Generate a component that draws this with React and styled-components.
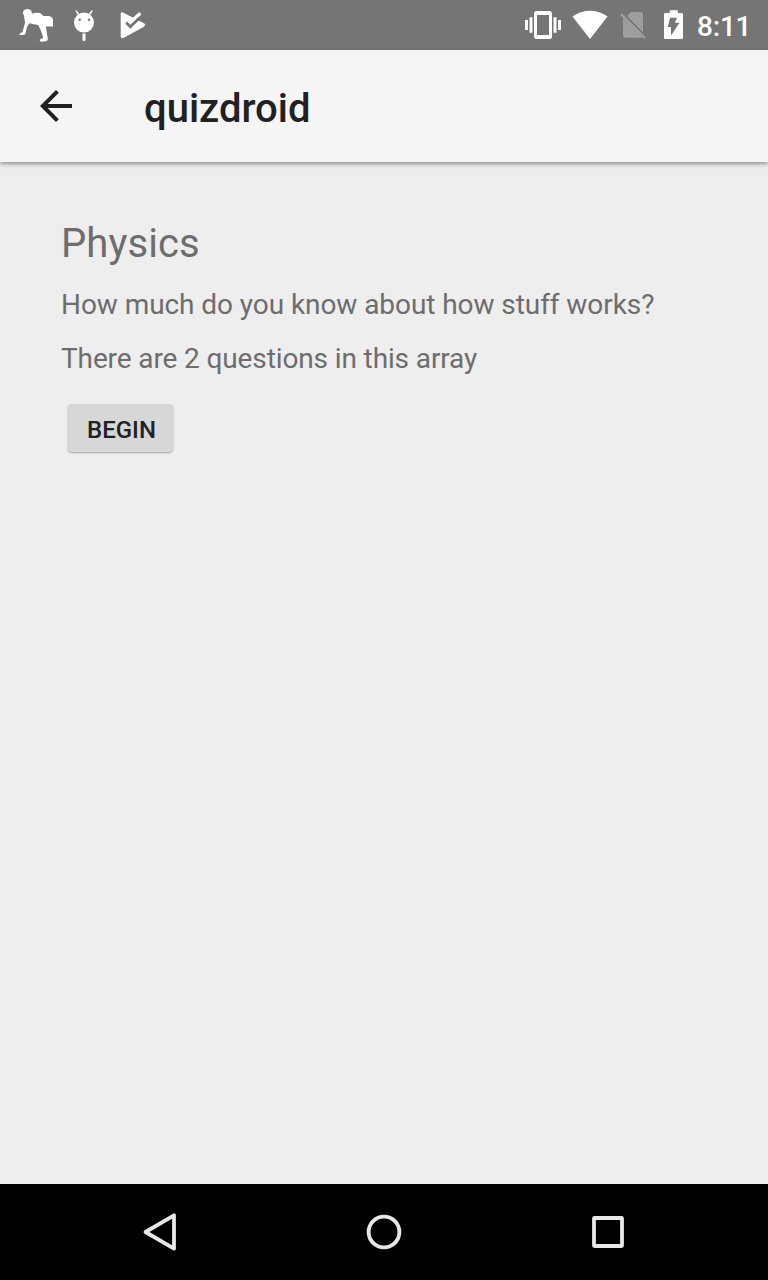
import React from "react";
import styled, { createGlobalStyle } from "styled-components";

const GlobalStyle = createGlobalStyle`
  * { box-sizing: border-box; }
  body { margin: 0; background: #eeeeee; font-family: Roboto, "Liberation Sans", sans-serif; }
`;

const Screen = styled.div`
  display: flex;
  flex-direction: column;
  width: 768px;
  height: 1280px;
  background: #eeeeee;
`;

const StatusBar = styled.header`
  display: flex;
  justify-content: space-between;
  flex: none;
  height: 50px;
  padding: 0 14px 0 16px;
  background: #757575;
  color: #ffffff;
`;

const StatusGroup = styled.div`
  display: flex;
  align-items: center;
`;

const Glyph = styled.svg`
  display: block;
  flex: none;
`;

const Clock = styled.time`
  width: 58px;
  padding: 3px 0 0 1px;
  font-size: 28px;
  font-weight: 500;
  line-height: 34px;
  letter-spacing: -0.2px;
  white-space: nowrap;
`;

const AppBar = styled.div`
  display: flex;
  align-items: center;
  flex: none;
  height: 112px;
  padding-left: 32px;
  background: #f5f5f5;
  box-shadow: 0 2px 3px rgba(0, 0, 0, 0.22), 0 2px 6px rgba(0, 0, 0, 0.2);
`;

const IconButton = styled.button`
  display: flex;
  padding: 0;
  border: 0;
  background: none;
`;

const Title = styled.h1`
  margin: 6px 0 0 64px;
  color: #212121;
  font-size: 40px;
  font-weight: 500;
  line-height: 48px;
`;

const Content = styled.main`
  display: flex;
  flex: 1;
  flex-direction: column;
  align-items: flex-start;
  padding: 58px 60px 0 61px;
  color: #6d6d6d;
`;

const Topic = styled.h2`
  margin: 0;
  font-size: 40px;
  font-weight: 400;
  line-height: 48px;
  letter-spacing: 0.1px;
`;

const Line = styled.p`
  margin: 20px 0 0;
  font-size: 28px;
  line-height: 34px;
  letter-spacing: ${(p) => p.$tracking}px;
`;

const BeginButton = styled.button`
  width: 105px;
  height: 48px;
  margin: 28px 0 0 7px;
  padding: 3px 0 0 2px;
  border: 0;
  border-radius: 4px;
  background: #d6d7d7;
  color: #212121;
  font: 500 24px/28px Roboto, "Liberation Sans", sans-serif;
  text-transform: uppercase;
  box-shadow: 0 1px 2px rgba(0, 0, 0, 0.3);
`;

const NavBar = styled.nav`
  display: flex;
  align-items: center;
  justify-content: space-between;
  flex: none;
  height: 96px;
  padding: 0 136px;
  background: #000000;
`;

const StatusIcon = ({ from, width, children }) => (
  <Glyph width={width} height="50" viewBox={`${from} 0 ${width} 50`} fill="#ffffff">
    {children}
  </Glyph>
);

const NavIcon = ({ children }) => (
  <IconButton>
    <Glyph width="48" height="48" viewBox="0 0 48 48" fill="none" stroke="#e8e8e8" strokeWidth="3.8" strokeLinejoin="round">
      {children}
    </Glyph>
  </IconButton>
);

export default function App() {
  return (
    <>
      <GlobalStyle />
      <Screen>
        <StatusBar>
          <StatusGroup>
            <StatusIcon from={16} width={48}>
              <ellipse cx="27.4" cy="13" rx="4.5" ry="4" />
              <path d="M24 15.5 L31 14 Q36 12 40 13 L43.5 16 L49 16 Q52 16.5 53 19 V26.5 H45.8 L47.8 38.5 Q48 41 45.5 41.2 L42 41.8 Q39 41.5 40 39.5 L43.3 37.8 L41 31 L38.3 25 Q34 24.5 29.5 23.3 L27 27 L25.5 33.8 Q25 35.2 19.4 35 Q19 33.5 22.4 32.3 L25 23 Z" />
            </StatusIcon>
            <StatusIcon from={64} width={48}>
              <circle cx="84" cy="22.6" r="10" />
              <path d="M76.3 11 L79 15 M92 11 L89 15" stroke="#ffffff" strokeWidth="1.5" strokeLinecap="round" />
              <path d="M82.5 33.5H85.5V40Q85.5 41 84 41Q82.5 41 82.5 40Z" />
              <circle cx="79.7" cy="19.7" r="1.2" fill="#757575" />
              <circle cx="89" cy="19.7" r="1.2" fill="#757575" />
            </StatusIcon>
            <StatusIcon from={112} width={48}>
              <path d="M120.7 14 Q120.5 11.4 123 12.5 L144 23.3 Q146 25 144 26.7 L123.3 38 Q120.7 38.8 120.7 36 Z" />
              <path d="M126.2 22.6 L130.3 26.8 L143 14.5" fill="none" stroke="#757575" strokeWidth="2.8" />
              <path d="M131 21.5 L140.3 13.3" fill="none" stroke="#ffffff" strokeWidth="3.2" />
            </StatusIcon>
          </StatusGroup>
          <StatusGroup>
            <StatusIcon from={520} width={48}>
              <path fillRule="evenodd" d="M536.5 11H549.5Q552 11 552 13.5V36.5Q552 39 549.5 39H536.5Q534 39 534 36.5V13.5Q534 11 536.5 11ZM537 15V35H549V15Z" />
              <path d="M525 20H528V30H525ZM529.5 17.3H532.5V32.7H529.5ZM553.5 17.3H556.5V32.7H553.5ZM558 20H561V30H558Z" />
            </StatusIcon>
            <StatusIcon from={568} width={48}>
              <path d="M572.5 16.5C583 8.8 597 8.8 607.5 16.5L590 39Z" />
            </StatusIcon>
            <StatusIcon from={616} width={40}>
              <g fill="#9e9e9e">
                <path d="M631 12H640.5Q643 12 643 14.5V32.2L627 16ZM623 17.5L643 37.8H625.5Q623 37.8 623 35.5Z" />
                <path d="M621.8 13.2L645.9 37.2L644.2 39L620 14.8Z" />
              </g>
            </StatusIcon>
            <StatusIcon from={656} width={40}>
              <path d="M669.7 10.2H677.8V13H682Q683 13 683 14V38Q683 39 682 39H665Q664 39 664 38V14Q664 13 665 13H669.7Z" />
              <path d="M670 17.8H677L674.7 22.8H679.5L671 35.5V27H667.8Z" fill="#757575" />
            </StatusIcon>
            <Clock>8:11</Clock>
          </StatusGroup>
        </StatusBar>
        <AppBar>
          <IconButton aria-label="Back">
            <Glyph width="48" height="48" viewBox="0 0 24 24" fill="#212121">
              <path d="M20 11H7.83l5.59-5.59L12 4l-8 8 8 8 1.41-1.41L7.83 13H20v-2z" />
            </Glyph>
          </IconButton>
          <Title>quizdroid</Title>
        </AppBar>
        <Content>
          <Topic>Physics</Topic>
          <Line $tracking={-0.07}>How much do you know about how stuff works?</Line>
          <Line $tracking={-0.12}>There are 2 questions in this array</Line>
          <BeginButton>Begin</BeginButton>
        </Content>
        <NavBar>
          <NavIcon>
            <path d="M9.5 24L38 7.3V40.7Z" />
          </NavIcon>
          <NavIcon>
            <circle cx="24" cy="24" r="15.4" />
          </NavIcon>
          <NavIcon>
            <rect x="10" y="10" width="28" height="28" rx="0.5" />
          </NavIcon>
        </NavBar>
      </Screen>
    </>
  );
}
